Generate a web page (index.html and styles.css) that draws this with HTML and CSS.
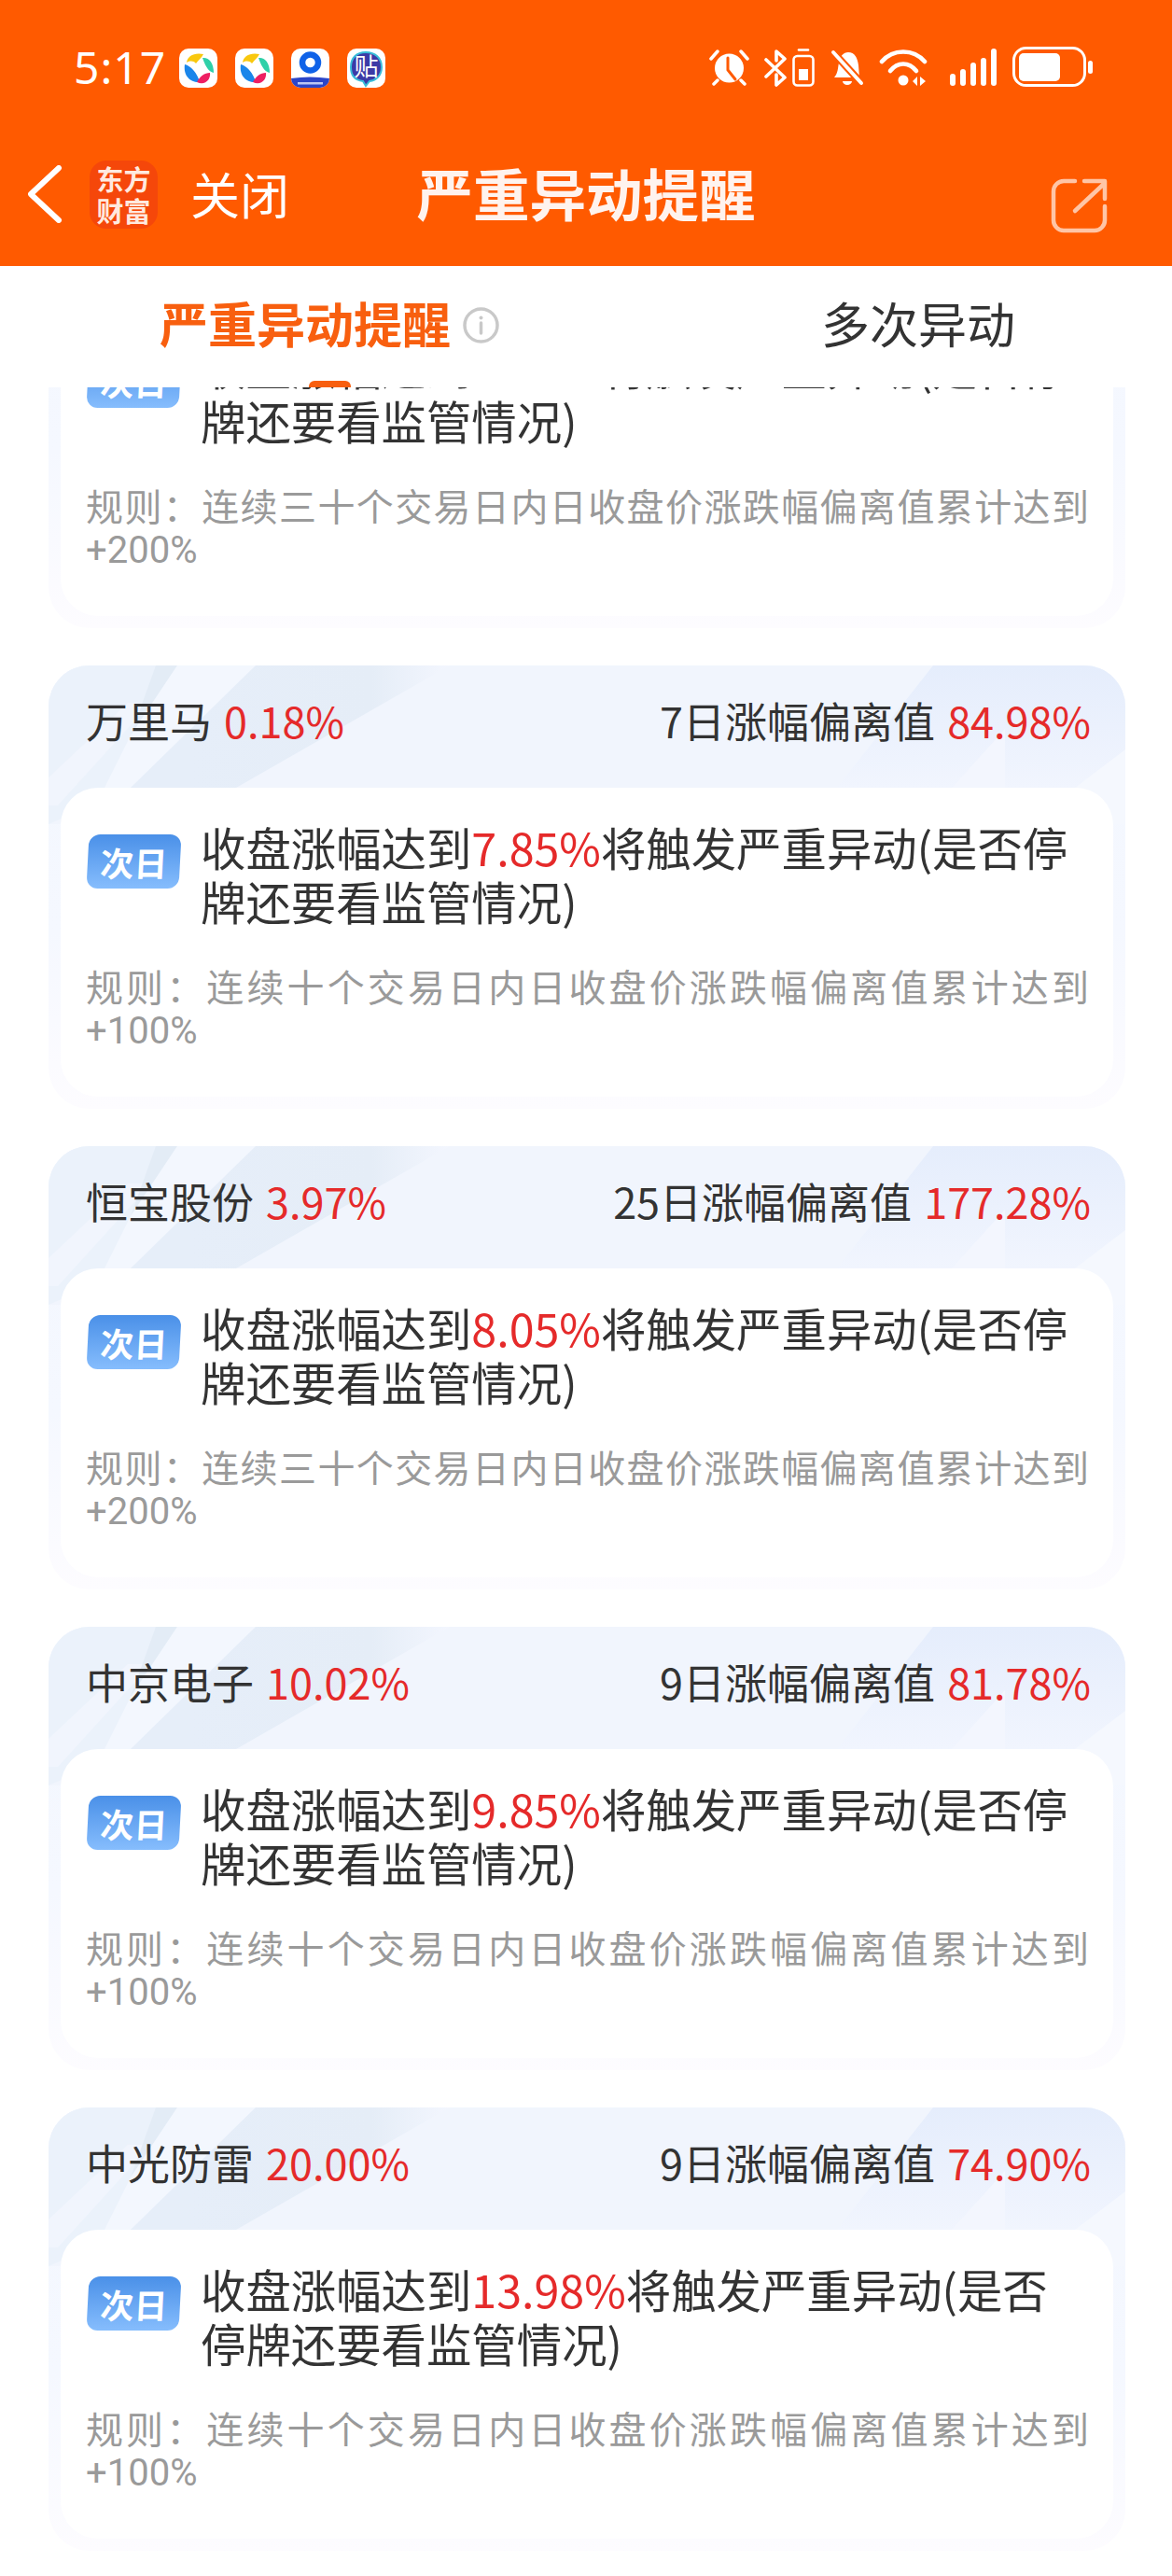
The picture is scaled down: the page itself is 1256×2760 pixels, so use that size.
FILE: index.html
```html
<!DOCTYPE html>
<html lang="zh-CN">
<head>
    <meta charset="UTF-8" />
    <meta name="viewport" content="width=device-width, initial-scale=1.0" />
    <title>严重异动提醒</title>
    <link rel="stylesheet" href="styles.css">
</head>
<body>
    <svg class="defs" width="0" height="0">
        <defs>
            <linearGradient id="deco-r" x1="0" y1="0" x2="0" y2="1">
                <stop offset="0" stop-color="#e5edfc"/>
                <stop offset="1" stop-color="#f1f5fe"/>
            </linearGradient>
            <linearGradient id="deco-l" gradientUnits="userSpaceOnUse" x1="150" y1="0" x2="430" y2="0">
                <stop offset="0" stop-color="#e6eef9"/>
                <stop offset="0.7" stop-color="#e5edf7"/>
                <stop offset="1" stop-color="#f3f6fe"/>
            </linearGradient>
        </defs>
        <symbol id="app-ball" viewBox="0 0 41 42">
            <rect width="41" height="42" rx="10" fill="#fff"/>
            <path d="M8 15C9 8 16 4 26 6C24 10 21 12 18 16C15 13 12 13 8 15Z" fill="#f9c80e"/>
            <path d="M25 10C31 9 37 14 37 26C33 25 29 22 25 10Z" fill="#2fd0a8"/>
            <path d="M6 17C12 18 20 27 22 36C13 37 4 30 6 17Z" fill="#1a86ea"/>
            <path d="M19 36C22 30 27 26 33 26C34 33 28 40 19 36Z" fill="#ee1f62"/>
        </symbol>
        <symbol id="card-deco" viewBox="0 0 1154 170">
            <rect width="1154" height="170" fill="#f1f5fd"/>
            <polygon points="0,0 140,0 90,131 0,170" fill="#ebf2fb"/>
            <polygon points="85,40 110,40 10,150 0,150 0,120" fill="#f1f5fd"/>
            <polygon points="115,0 138,0 88,75" fill="#e3ecf6"/>
            <polygon points="138,0 222,0 88,131 60,131 88,75" fill="#f3f7fe"/>
            <polygon points="222,0 430,0 201,131 88,131" fill="url(#deco-l)"/>
            <polygon points="948,0 1154,0 1154,95 1100,131 845,131" fill="url(#deco-r)"/>
            <polygon points="1025,68 1025,131 968,131" fill="#f3f6fe"/>
            <polygon points="1154,90 1154,170 1075,170 1075,131 1100,131" fill="#f5f8fe"/>
        </symbol>
    </svg>

    <header class="app-bar">
        <div class="status-bar">
            <div class="status-left">
                <span class="clock">5:17</span>
                <div class="app-icons">
                    <svg class="app-icon" viewBox="0 0 41 42"><use href="#app-ball"/></svg>
                    <svg class="app-icon" viewBox="0 0 41 42"><use href="#app-ball"/></svg>
                    <svg class="app-icon" viewBox="0 0 41 42">
                        <rect width="41" height="42" rx="10" fill="#fff"/>
                        <path d="M0 32Q20 29 41 32V32A10 10 0 0 1 31 42H10A10 10 0 0 1 0 32Z" fill="#2b45c8"/>
                        <circle cx="20.5" cy="15" r="8.5" fill="none" stroke="#0f62e8" stroke-width="6.5"/>
                        <rect x="7" y="36" width="27" height="2.5" fill="#b9c6f5"/>
                    </svg>
                    <svg class="app-icon" viewBox="0 0 41 42">
                        <rect width="41" height="42" rx="10" fill="#fff"/>
                        <path d="M20 4C30 4 37 10 37 20C37 29 31 34 24 35L20 40L17 35C9 34 4 29 4 20C4 10 10 4 20 4Z" fill="#3c3aa6" stroke="#39bcd8" stroke-width="2"/>
                        <text x="20.5" y="29" class="app-glyph">贴</text>
                    </svg>
                </div>
            </div>
            <div class="status-right">
                <svg class="ico-alarm" viewBox="0 0 43 40" fill="none" stroke="#fff" stroke-linecap="round">
                    <circle cx="21.5" cy="21" r="15.5" fill="#fff" stroke="none"/>
                    <path d="M20 10V23L28 33" stroke="#ff5a00" stroke-width="3"/>
                    <path d="M2 11L9 3M41 11L34 3M9 34L5 38M34 34L38 38" stroke-width="3.5"/>
                </svg>
                <svg class="ico-bt" viewBox="0 0 26 41" fill="none" stroke="#fff" stroke-width="3.6" stroke-linecap="round" stroke-linejoin="round">
                    <path d="M3 12L23 31L14 39V28M14 13V3L23 11L3 30"/>
                </svg>
                <svg class="ico-cell" viewBox="0 0 24 41" fill="none" stroke="#fff" stroke-width="2.6">
                    <path d="M7 1.5H17" stroke-linecap="round"/>
                    <rect x="1.5" y="8" width="21" height="31.5" rx="4"/>
                    <rect x="7" y="22" width="10" height="12" fill="#fff" stroke="none"/>
                </svg>
                <svg class="ico-bell" viewBox="0 0 36 40">
                    <path d="M4 31C8 27 8 20 9 15C10 8 14 4 19 4C26 4 29 10 30 18L31 31Z" fill="#fff"/>
                    <path d="M13 35H23A5 4 0 0 1 13 35Z" fill="#fff"/>
                    <path d="M2 3L34 38" stroke="#ff5a00" stroke-width="8"/>
                    <path d="M3 4L33 37" stroke="#fff" stroke-width="4" stroke-linecap="round"/>
                </svg>
                <svg class="ico-wifi" viewBox="0 0 52 40" fill="none" stroke="#fff" stroke-width="4.6" stroke-linecap="round">
                    <path d="M3 14C15 0 37 0 49 14"/>
                    <path d="M12 24C20 14 32 14 40 24"/>
                    <circle cx="26" cy="34" r="5.5" fill="#fff" stroke="none"/>
                    <path d="M41 30V40L36 35ZM44 30V40L50 35Z" fill="#fff" stroke="none"/>
                </svg>
                <svg class="ico-signal" viewBox="0 0 50 40" fill="#fff">
                    <rect x="0" y="27" width="6" height="13" rx="3"/>
                    <rect x="11" y="22" width="6" height="18" rx="3"/>
                    <rect x="22" y="15" width="6" height="25" rx="3"/>
                    <rect x="33" y="10" width="6" height="30" rx="3"/>
                    <rect x="44" y="0" width="6" height="40" rx="3"/>
                </svg>
                <svg class="ico-battery" viewBox="0 0 86 43">
                    <rect x="1.5" y="1.5" width="76" height="40" rx="13" fill="none" stroke="#fff" stroke-width="3"/>
                    <rect x="7" y="7" width="44" height="30" rx="5" fill="#fff"/>
                    <rect x="81" y="15" width="5" height="14" rx="2.5" fill="#fff"/>
                </svg>
            </div>
        </div>
        <nav class="nav-bar">
            <div class="nav-left">
                <svg class="ico-back" viewBox="0 0 37 62" fill="none" stroke="#fff" stroke-width="6" stroke-linecap="round" stroke-linejoin="round">
                    <path d="M33 3L3 31L33 59"/>
                </svg>
                <div class="logo">东方<br>财富</div>
                <span class="close-text">关闭</span>
            </div>
            <h1 class="nav-title">严重异动提醒</h1>
            <div class="nav-right">
                <svg class="ico-share" viewBox="0 0 61 59" fill="none" stroke="#fff" stroke-opacity="0.65" stroke-width="4.5" stroke-linecap="round" stroke-linejoin="round">
                    <path d="M26 3H14A11 11 0 0 0 3 14V45A11 11 0 0 0 14 56H47A11 11 0 0 0 58 45V30"/>
                    <path d="M26 35L57 6M36 3H58V22"/>
                </svg>
            </div>
        </nav>
    </header>

    <div class="tabs">
        <div class="tab tab-main">
            <span class="tab-active">严重异动提醒</span>
            <svg class="ico-info" viewBox="0 0 39 39" fill="none" stroke="#c9c9c9" stroke-width="3.5">
                <circle cx="19.5" cy="19.5" r="17.5"/>
                <path d="M19.5 17V28" stroke-linecap="round"/>
                <circle cx="19.5" cy="11.5" r="2" fill="#c9c9c9" stroke="none"/>
            </svg>
            <i class="tab-bar"></i>
        </div>
        <div class="tab tab-other">多次异动</div>
    </div>

    <main class="list">
        <section class="card card-first">
            <svg class="card-bg"><use href="#card-deco"/></svg>
            <div class="card-head"></div>
            <div class="card-body">
                <div class="alert">
                    <span class="badge"><b>次日</b></span>
                    <p class="alert-text">收盘涨幅达到<em>8.05%</em>将触发严重异动(是否停牌还要看监管情况)</p>
                </div>
                <p class="rule">规则：连续三十个交易日内日收盘价涨跌幅偏离值累计达到+200%</p>
            </div>
        </section>

        <section class="card">
            <svg class="card-bg"><use href="#card-deco"/></svg>
            <div class="card-head">
                <span>万里马 <em>0.18%</em></span>
                <span>7日涨幅偏离值 <em>84.98%</em></span>
            </div>
            <div class="card-body">
                <div class="alert">
                    <span class="badge"><b>次日</b></span>
                    <p class="alert-text">收盘涨幅达到<em>7.85%</em>将触发严重异动(是否停牌还要看监管情况)</p>
                </div>
                <p class="rule">规则：连续十个交易日内日收盘价涨跌幅偏离值累计达到+100%</p>
            </div>
        </section>

        <section class="card">
            <svg class="card-bg"><use href="#card-deco"/></svg>
            <div class="card-head">
                <span>恒宝股份 <em>3.97%</em></span>
                <span>25日涨幅偏离值 <em>177.28%</em></span>
            </div>
            <div class="card-body">
                <div class="alert">
                    <span class="badge"><b>次日</b></span>
                    <p class="alert-text">收盘涨幅达到<em>8.05%</em>将触发严重异动(是否停牌还要看监管情况)</p>
                </div>
                <p class="rule">规则：连续三十个交易日内日收盘价涨跌幅偏离值累计达到+200%</p>
            </div>
        </section>

        <section class="card">
            <svg class="card-bg"><use href="#card-deco"/></svg>
            <div class="card-head">
                <span>中京电子 <em>10.02%</em></span>
                <span>9日涨幅偏离值 <em>81.78%</em></span>
            </div>
            <div class="card-body">
                <div class="alert">
                    <span class="badge"><b>次日</b></span>
                    <p class="alert-text">收盘涨幅达到<em>9.85%</em>将触发严重异动(是否停牌还要看监管情况)</p>
                </div>
                <p class="rule">规则：连续十个交易日内日收盘价涨跌幅偏离值累计达到+100%</p>
            </div>
        </section>

        <section class="card">
            <svg class="card-bg"><use href="#card-deco"/></svg>
            <div class="card-head">
                <span>中光防雷 <em>20.00%</em></span>
                <span>9日涨幅偏离值 <em>74.90%</em></span>
            </div>
            <div class="card-body">
                <div class="alert">
                    <span class="badge"><b>次日</b></span>
                    <p class="alert-text">收盘涨幅达到<em>13.98%</em>将触发严重异动(是否停牌还要看监管情况)</p>
                </div>
                <p class="rule">规则：连续十个交易日内日收盘价涨跌幅偏离值累计达到+100%</p>
            </div>
        </section>
    </main>
</body>
</html>
```

FILE: styles.css
```css
/* page */
body {
    margin: 0;
    width: 1256px;
    height: 2760px;
    overflow: hidden;
    background: #fff;
    color: #333;
    font-family: "Noto Sans CJK SC", "Noto Sans", sans-serif;
}
.defs { position: absolute; }
em { font-style: normal; color: #e52a2a; }

/* orange header */
.app-bar {
    height: 285px;
    background: #ff5a00;
    color: #fff;
}
.status-bar {
    height: 145px;
    padding: 50px 85px 0 79px;
    box-sizing: border-box;
    display: flex;
    justify-content: space-between;
}
.status-left { display: flex; gap: 15px; height: 44px; }
.clock {
    width: 98px;
    font-size: 48px;
    line-height: 44px;
    letter-spacing: 1px;
    white-space: nowrap;
    font-family: "Noto Sans", sans-serif;
}
.app-icons { display: flex; gap: 19px; margin-top: 2px; }
.app-icon { width: 41px; height: 42px; }
.app-glyph {
    font-size: 26px;
    fill: #fff;
    text-anchor: middle;
}
.status-right { display: flex; align-items: flex-start; }
.status-right svg { margin-top: 2px; }
.ico-alarm { width: 43px; height: 40px; margin-right: 15px; }
.ico-bt { width: 26px; height: 41px; margin-right: 5px; }
.ico-cell { width: 24px; height: 41px; margin-right: 17px; }
.ico-bell { width: 36px; height: 40px; margin-right: 16px; }
.ico-wifi { width: 52px; height: 40px; margin-right: 24px; }
.ico-signal { width: 50px; height: 40px; margin-right: 17px; }
.status-right .ico-battery { width: 86px; height: 43px; margin-top: 0; }

.nav-bar {
    display: grid;
    grid-template-columns: 1fr auto 1fr;
    align-items: center;
    height: 140px;
}
.nav-left { display: flex; align-items: center; padding: 0 0 14px 30px; }
.ico-back { width: 37px; height: 62px; }
.logo {
    width: 73px;
    height: 73px;
    margin-left: 29px;
    border-radius: 18px;
    background: #f5470a;
    font-size: 29px;
    font-weight: 700;
    line-height: 34px;
    text-align: center;
    padding-top: 2px;
    box-sizing: border-box;
    color: #ffe9df;
}
.close-text { margin-left: 35px; font-size: 53px; line-height: 60px; margin-top: -3px; }
.nav-title {
    margin: 0 0 19px;
    font-size: 60.5px;
    line-height: 70px;
    font-weight: 700;
    color: #fff3ee;
}
.nav-right { display: flex; justify-content: flex-end; padding: 10px 69px 0 0; }
.ico-share { width: 61px; height: 59px; }

/* tabs */
.tabs {
    display: grid;
    grid-template-columns: 706px 550px;
    height: 130px;
}
.tab {
    position: relative;
    display: flex;
    justify-content: center;
    gap: 13px;
    padding-top: 32px;
    font-size: 52px;
    line-height: 58px;
}
.tab-active { color: #f85f0f; font-weight: 700; }
.tab-other { padding-left: 6px; }
.ico-info { width: 39px; height: 39px; margin-top: 12px; }
.tab-bar {
    position: absolute;
    left: 331px;
    bottom: 0;
    width: 45px;
    height: 7px;
    border-radius: 6px 6px 0 0;
    background: #f85f0f;
}

/* cards */
.list {
    height: 2345px;
    overflow: hidden;
    display: flex;
    flex-direction: column;
    gap: 40px;
    padding: 0 50px 0 52px;
}
.card {
    position: relative;
    flex: none;
    height: 475px;
    border-radius: 44px;
    overflow: hidden;
    background: linear-gradient(180deg, #f3f7fe 0%, #f5f8ff 60%, #fdfcff 100%);
}
.card-first { margin-top: -217px; }
.card-bg {
    position: absolute;
    left: 0;
    top: 0;
    width: 1154px;
    height: 170px;
}
.card-head {
    position: relative;
    display: flex;
    justify-content: space-between;
    align-items: center;
    height: 131px;
    padding: 0 37px 14px 40px;
    box-sizing: border-box;
    font-size: 45px;
    line-height: 60px;
}
.card-head em { margin-left: 3px; }
.card-body {
    position: relative;
    margin: 0 13px;
    height: 331px;
    padding: 34px 26px 0 27px;
    box-sizing: border-box;
    background: #fff;
    border-radius: 40px;
}
.alert { display: flex; gap: 22px; }
.badge {
    flex: none;
    width: 99px;
    height: 58px;
    margin: 16px 0 0 2px;
    border-radius: 12px;
    background: linear-gradient(180deg, #4a90e8 0%, #86bdfd 100%);
    transform: skewX(-3deg);
    color: #fff;
    text-align: center;
    font-size: 36px;
    line-height: 58px;
}
.badge b { font-weight: 700; }
.alert-text {
    flex: 1;
    margin: 0;
    padding-right: 13px;
    font-size: 48.4px;
    line-height: 58px;
}
.rule {
    margin: 43px 0 0;
    font-family: Roboto, "Noto Sans CJK SC", sans-serif;
    font-size: 40px;
    line-height: 45px;
    color: #9a9a9a;
    text-align: justify;
}
```
